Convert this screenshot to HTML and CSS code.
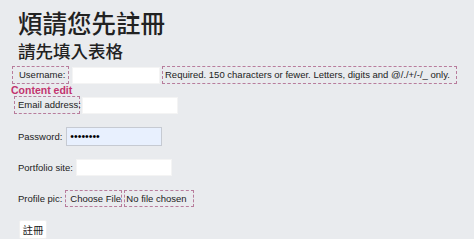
FILE: index.html
```html
<!DOCTYPE html>
<html lang="zh-Hant">
<head>
    <meta charset="UTF-8">
    <meta name="viewport" content="width=device-width, initial-scale=1.0">
    <title>註冊</title>
    <link rel="stylesheet" href="styles.css">
</head>
<body>
    <h1>煩請您先註冊</h1>
    <h2>請先填入表格</h2>

    <form class="signup">
        <div class="row">
            <label class="mark user-label">Username:</label>
            <input type="text" class="field user-field">
            <span class="mark help">Required. 150 characters or fewer. Letters, digits and @/./+/-/_ only.</span>
        </div>

        <!-- editor tag shown under the username row -->
        <div class="edit-tag">Content edit</div>

        <div class="row">
            <label class="mark email-label">Email address:</label>
            <input type="email" class="field email-field">
        </div>

        <div class="row">
            <label>Password:</label>
            <input type="password" class="field pass-field" value="12345678">
        </div>

        <div class="row">
            <label>Portfolio site:</label>
            <input type="url" class="field site-field">
        </div>

        <div class="row">
            <label>Profile pic:</label>
            <span class="mark file-btn">Choose File</span>
            <span class="mark file-name">No file chosen</span>
        </div>

        <button type="submit" class="submit">註冊</button>
    </form>
</body>
</html>
```

FILE: styles.css
```css
/* Page base */
body {
    background-color: #e9ebee;
    color: #222;
    font-family: 'Liberation Sans', Arial, 'Noto Sans CJK TC', sans-serif;
    font-size: 9.5px;
    margin: 0;
    padding: 9px 0 0 18px;
    overflow: hidden;
}

h1 {
    font-family: 'Noto Sans CJK TC', sans-serif;
    font-size: 24.5px;
    font-weight: 500;
    line-height: 28px;
    margin: 0 0 4px;
}

h2 {
    font-family: 'Noto Sans CJK TC', sans-serif;
    font-size: 17.5px;
    font-weight: 500;
    line-height: 20px;
    margin: 0 0 5px;
}

/* Form rows */
.signup {
    display: flex;
    flex-direction: column;
    align-items: flex-start;
}

.row {
    display: flex;
    align-items: center;
    height: 18px;
    margin-bottom: 13px;
}

.row label {
    margin-right: 4px;
}

/* Dashed outlines from the content editor */
.mark {
    border: 1px dashed #b87c9c;
    box-sizing: border-box;
    height: 18px;
    line-height: 16px;
    white-space: nowrap;
}

.user-label {
    margin-left: -6px;
    padding: 0 4px 0 6px;
    width: 57px;
}

.row .user-label {
    margin-right: 3px;
}

.help {
    margin-left: 2px;
    padding-left: 2px;
    width: 295px;
}

.edit-tag {
    color: #c2336e;
    font-weight: bold;
    font-size: 10.5px;
    line-height: 12px;
    margin: 0 0 0 -7px;
}

.row:first-child {
    margin-bottom: 0;
}

.email-label {
    margin-left: -4px;
    padding-left: 3px;
    width: 66px;
    overflow: visible;
}

.row .email-label {
    margin-right: 2px;
}

/* Inputs */
.field {
    background-color: #fff;
    border: 1px solid #f4f4f4;
    box-sizing: border-box;
    height: 17px;
    padding: 0 3px;
    margin: 0;
    font-size: 9px;
}

.user-field {
    width: 88px;
}

.email-field {
    width: 96px;
}

.pass-field {
    width: 96px;
    height: 19px;
    background-color: #e8f0fe;
    border: 1px solid #c6cad2;
    color: #000;
    font-size: 10.5px;
}

.site-field {
    width: 96px;
}

.row label + .site-field {
    margin-left: -1px;
}

/* File picker */
.file-btn {
    height: 17px;
    padding-left: 4px;
    width: 57px;
    margin-left: -1px;
}

.file-name {
    height: 17px;
    margin-left: 2px;
    padding-left: 1px;
    width: 70px;
}

.submit {
    background-color: #fff;
    border: 1px solid #f0f0f0;
    border-radius: 2px;
    color: #222;
    font-family: 'Noto Sans CJK TC', sans-serif;
    font-size: 10.5px;
    height: 19px;
    line-height: 17px;
    margin: 0 0 0 1px;
    padding: 0;
    width: 28px;
    white-space: nowrap;
}
```
